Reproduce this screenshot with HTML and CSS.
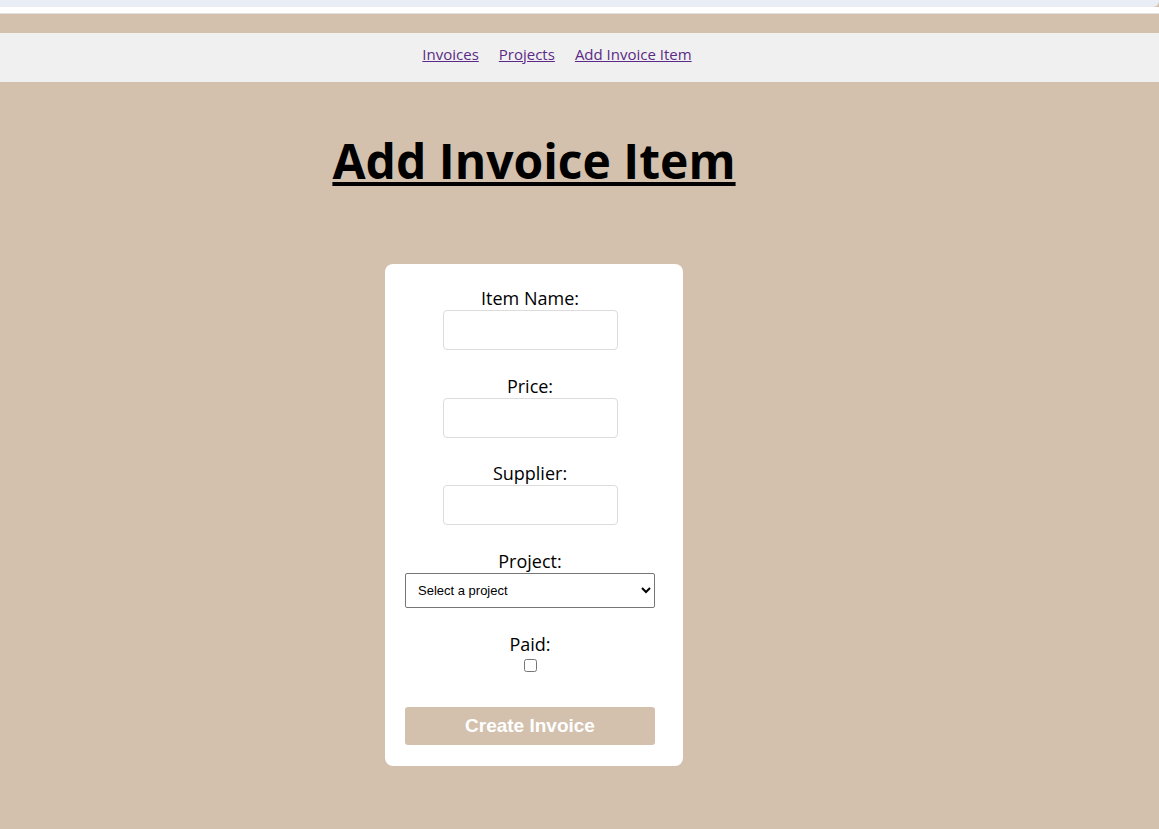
FILE: index.html
```html
<!DOCTYPE html>
<html lang="en">
<head>
<meta charset="utf-8">
<title>Add Invoice Item</title>
<link rel="stylesheet" href="styles.css">
</head>
<body>
<div class="top-strip"></div>
<div class="white-strip"></div>
<div class="gap-strip"></div>
<nav class="nav">
  <a href="#" class="nav-link">Invoices</a>
  <a href="#" class="nav-link">Projects</a>
  <a href="#" class="nav-link">Add Invoice Item</a>
</nav>
<main class="main">
  <h1 class="title">Add Invoice Item</h1>
  <form class="card">
    <div class="field">
      <label class="label" for="name">Item Name:</label>
      <input class="text-input" id="name" type="text">
    </div>
    <div class="field">
      <label class="label" for="price">Price:</label>
      <input class="text-input" id="price" type="text">
    </div>
    <div class="field">
      <label class="label" for="supplier">Supplier:</label>
      <input class="text-input" id="supplier" type="text">
    </div>
    <div class="field">
      <label class="label" for="project">Project:</label>
      <select class="select" id="project">
        <option>Select a project</option>
      </select>
    </div>
    <div class="field">
      <label class="label" for="paid">Paid:</label>
      <input class="checkbox" id="paid" type="checkbox">
    </div>
    <button type="button" class="submit">Create Invoice</button>
  </form>
</main>
</body>
</html>
```
FILE: styles.css
```css
html, body {
  margin: 0;
  padding: 0;
}
body {
  background: #d3c1ae;
  font-family: "Open Sans", "Noto Sans", sans-serif;
  color: #000;
  min-height: 829px;
}
.top-strip {
  height: 7px;
  background: #e9edf6;
  border-bottom-right-radius: 6px;
}
.white-strip {
  height: 6px;
  background: #ffffff;
  border-bottom: 1px solid #e4e1e0;
}
.gap-strip {
  height: 19px;
}
.nav {
  box-sizing: border-box;
  height: 49px;
  background: #f0f0f0;
  display: flex;
  justify-content: center;
  align-items: center;
  gap: 20px;
  padding-right: 45px;
  padding-bottom: 7px;
  font-size: 15px;
}
.nav-link {
  color: #5b2a86;
  text-decoration: underline;
}
.main {
  display: flex;
  flex-direction: column;
  align-items: center;
  padding-right: 91px;
}
.title {
  font-size: 48px;
  font-weight: 700;
  text-decoration: underline;
  margin: 44px 0 0;
  line-height: 70px;
}
.card {
  margin-top: 68px;
  width: 250px;
  background: #fff;
  border-radius: 8px;
  padding: 22px 28px 21px 20px;
  display: flex;
  flex-direction: column;
  align-items: center;
}
.field {
  display: flex;
  flex-direction: column;
  align-items: center;
  width: 100%;
  margin-bottom: 23.7px;
}
.label {
  font-size: 18px;
  line-height: 24px;
}
.text-input {
  box-sizing: border-box;
  width: 175px;
  height: 40px;
  border: 1px solid #dcdcdc;
  border-radius: 4px;
  padding: 4px 8px;
  margin: 0;
}
.select {
  box-sizing: border-box;
  width: 250px;
  height: 35px;
  border: 1px solid #767676;
  border-radius: 2px;
  font-family: "Liberation Sans", Arial, sans-serif;
  font-size: 13px;
  padding: 0 8px;
  background: #fff;
  color: #000;
  margin: 0;
}
.checkbox {
  width: 13px;
  height: 13px;
  margin: 3px 0 0;
}
.submit {
  margin-top: 12px;
  width: 250px;
  height: 38px;
  border: none;
  border-radius: 3px;
  background: #d3c1ae;
  color: #fff;
  font-family: "Liberation Sans", Arial, sans-serif;
  font-weight: 700;
  font-size: 19px;
  cursor: pointer;
}
```
